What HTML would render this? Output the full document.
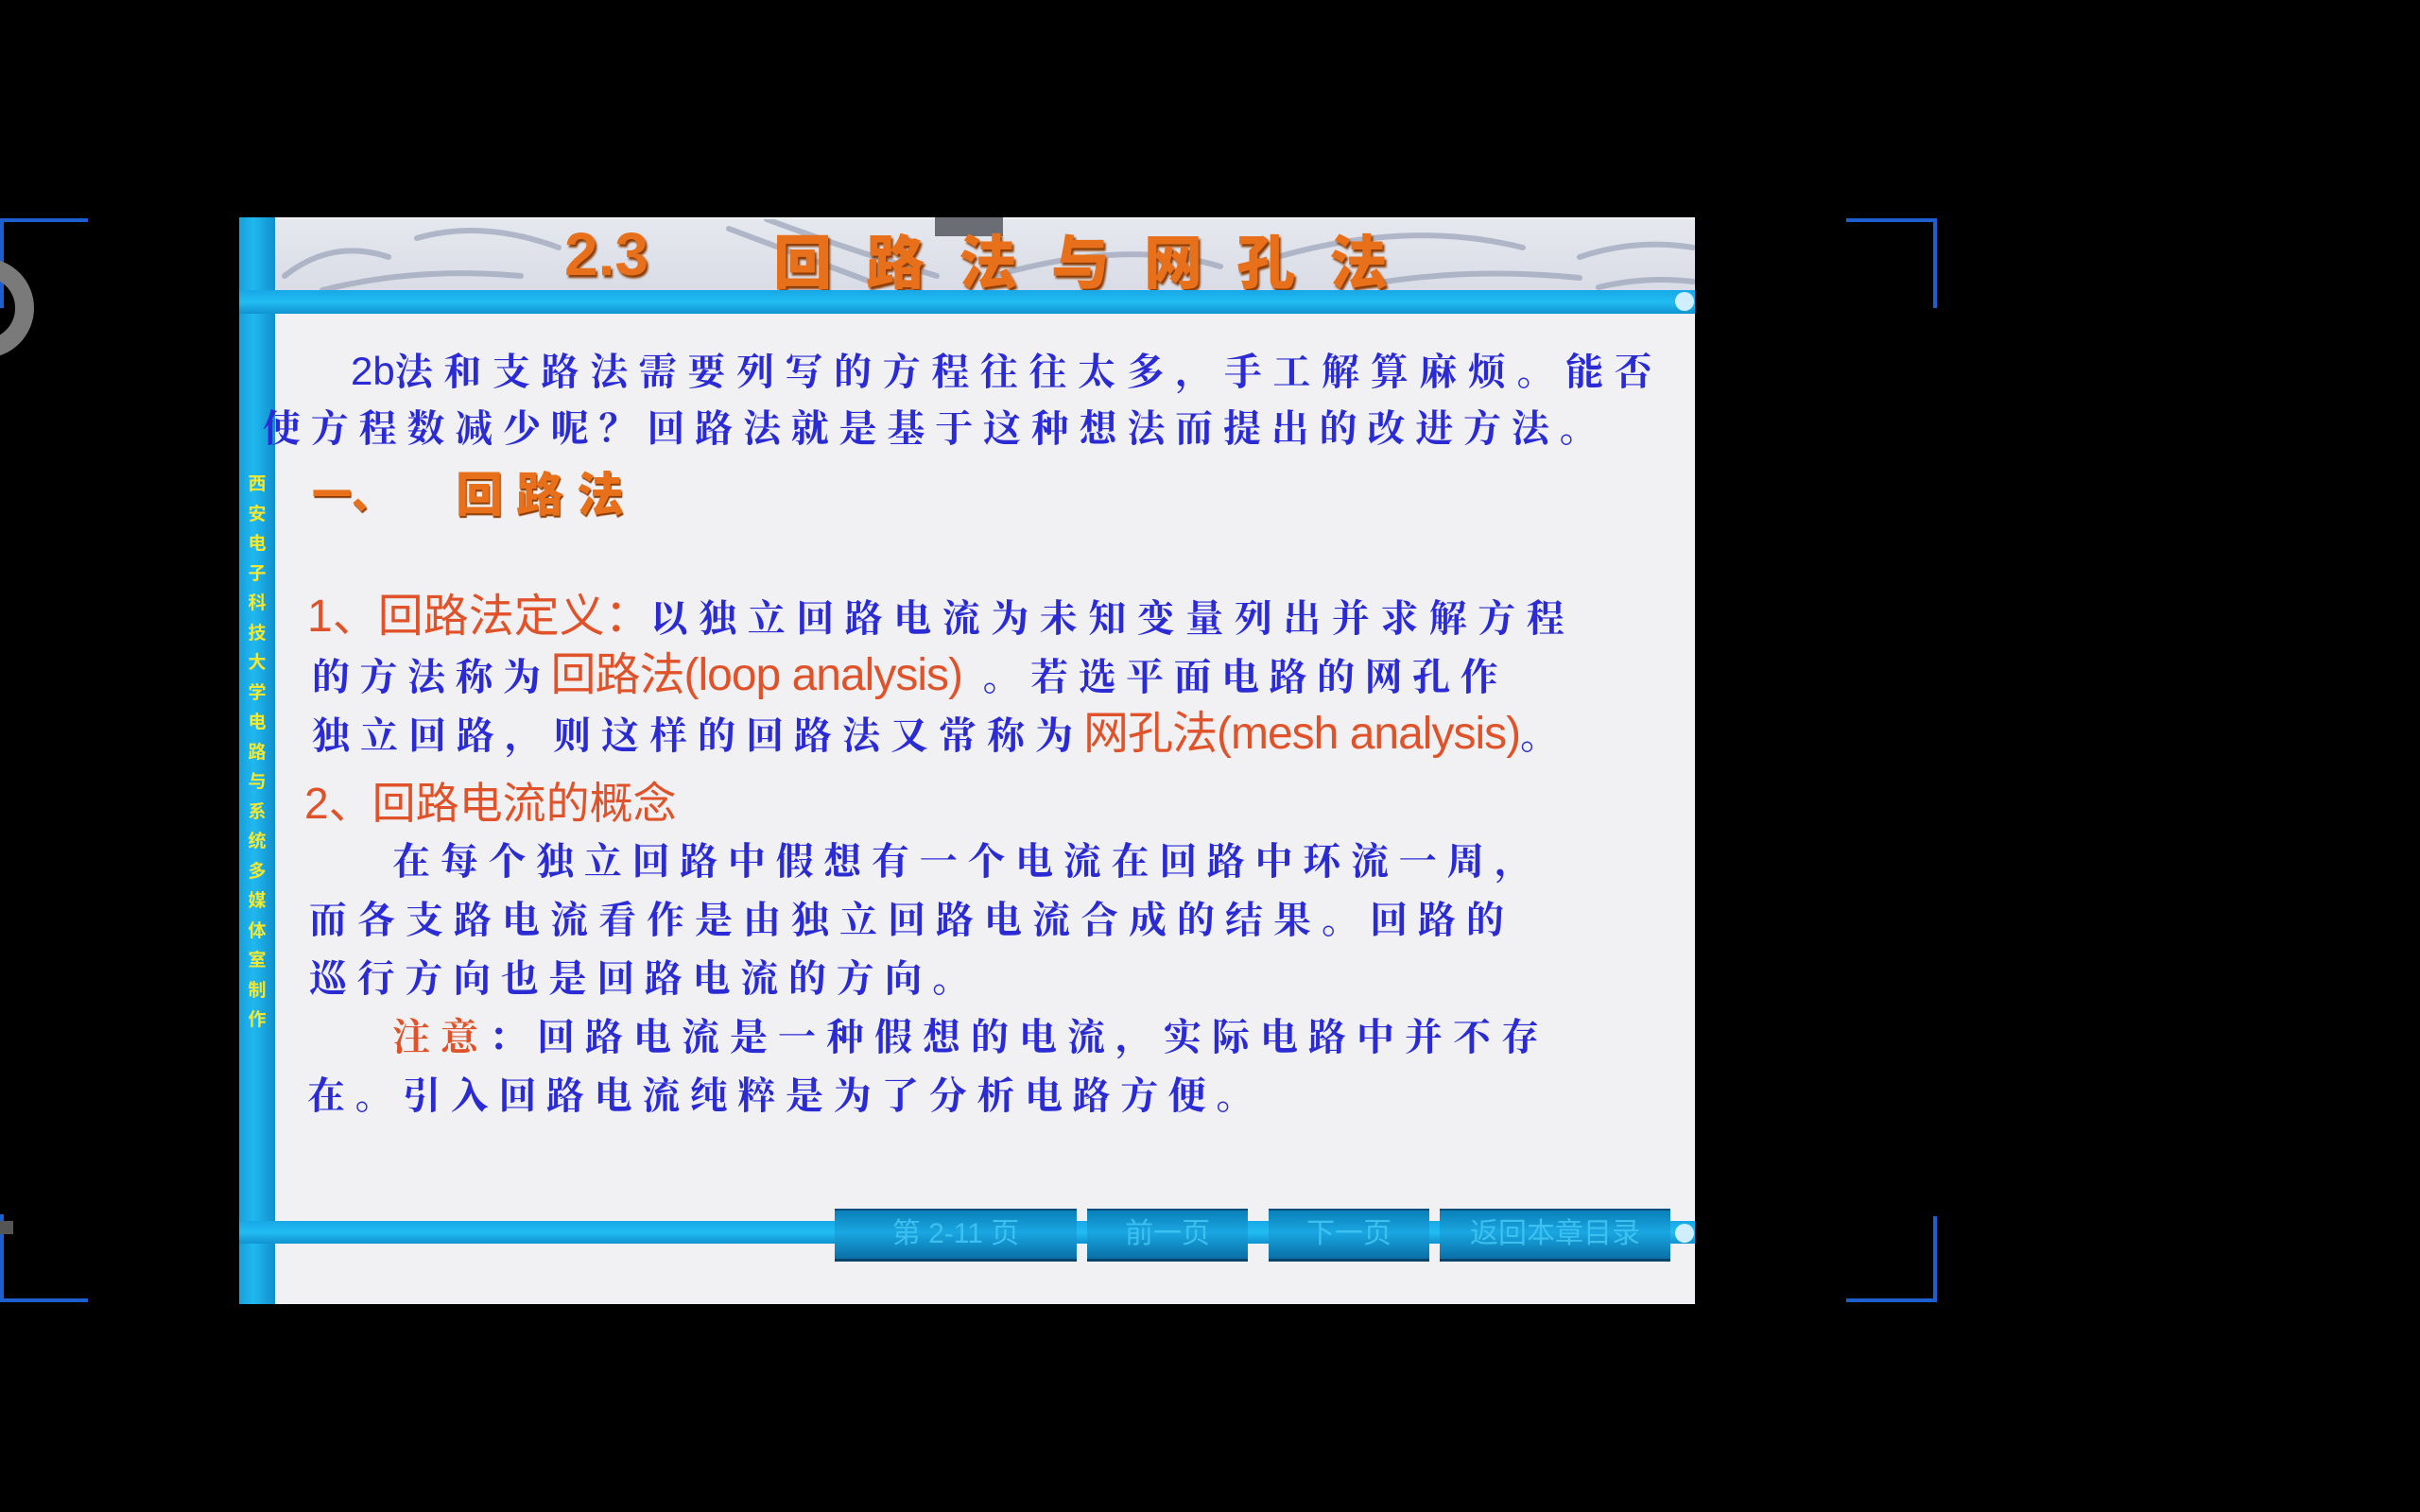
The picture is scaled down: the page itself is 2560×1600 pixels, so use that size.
<!DOCTYPE html>
<html><head><meta charset="utf-8"><style>
*{margin:0;padding:0;box-sizing:border-box}
body{width:2560px;height:1600px;background:#000;position:relative;overflow:hidden;font-family:"Liberation Sans","Noto Sans CJK SC",sans-serif}
.a{position:absolute;white-space:nowrap}
.b{color:#2b2bd6;font-size:40px;font-family:"Liberation Sans","Noto Serif CJK SC",serif;font-weight:700;letter-spacing:11px}
.o{color:#e0532a;font-size:48px;font-weight:400;font-family:"Liberation Sans","Noto Sans CJK SC",sans-serif;letter-spacing:0}
.btn{position:absolute;top:1279px;height:56px;background:linear-gradient(#0a7fb8,#1aa7e2 45%,#0a6fa6);border-top:2px solid #064f7a;border-bottom:3px solid #05456b;color:#3cc0f0;font-size:30px;text-align:center;line-height:50px;font-family:"Liberation Sans","Noto Sans CJK SC",sans-serif}
.v{position:absolute;left:262px;width:20px;color:#f2e830;font-size:19px;line-height:31.5px;text-align:center;font-weight:700;font-family:"Noto Sans CJK SC",sans-serif}
</style></head><body>
<div class="a" style="left:0;top:231px;width:93px;height:4px;background:#1e5fd0"></div>
<div class="a" style="left:0;top:231px;width:4px;height:95px;background:#1e5fd0"></div>
<div class="a" style="left:0;top:1374px;width:93px;height:4px;background:#1e5fd0"></div>
<div class="a" style="left:0;top:1285px;width:4px;height:93px;background:#1e5fd0"></div>
<div class="a" style="left:1953px;top:231px;width:96px;height:4px;background:#1e5fd0"></div>
<div class="a" style="left:2045px;top:231px;width:4px;height:95px;background:#1e5fd0"></div>
<div class="a" style="left:1953px;top:1374px;width:96px;height:4px;background:#1e5fd0"></div>
<div class="a" style="left:2045px;top:1287px;width:4px;height:91px;background:#1e5fd0"></div>
<div class="a" style="left:-70px;top:273px;width:106px;height:106px;border-radius:50%;border:20px solid #7a7a7a"></div>
<div class="a" style="left:0;top:1292px;width:14px;height:14px;background:#555"></div>

<div class="a" style="left:253px;top:230px;width:1540px;height:1150px;background:#f1f1f3"></div>
<div class="a" style="left:291px;top:232px;width:1502px;height:76px;background:linear-gradient(#e6e8ef,#d9dce6);overflow:hidden">
<svg width="1502" height="76" style="position:absolute;left:0;top:0">
<g fill="none" stroke="#9aa3b8" stroke-width="6" stroke-linecap="round" opacity=".7">
<path d="M10 60 Q60 20 120 40"/><path d="M150 20 Q220 0 300 30"/><path d="M50 75 Q150 50 260 60"/>
<path d="M480 10 Q560 40 640 70"/><path d="M520 0 Q600 30 700 60"/><path d="M760 60 Q900 20 1000 50"/>
<path d="M1060 40 Q1200 0 1320 30"/><path d="M1150 70 Q1260 50 1380 62"/><path d="M1380 40 Q1440 20 1500 30"/><path d="M1400 72 Q1450 60 1500 66"/>
</g></svg></div>
<div class="a" style="left:989px;top:230px;width:72px;height:20px;background:#6a6e74"></div>
<div class="a" style="left:597px;top:232px;font-size:64px;font-weight:700;color:#e8701a;text-shadow:2px 3px 2px #8a3a00">2.3</div>
<div class="a" style="left:818px;top:228px;font-size:62px;font-weight:900;color:#e8701a;letter-spacing:36px;text-shadow:2px 3px 2px #8a3a00;font-family:'Noto Sans CJK SC',sans-serif">回路法与网孔法</div>
<div class="a" style="left:253px;top:230px;width:38px;height:1150px;background:linear-gradient(90deg,#15a0dc,#21b8f0 40%,#118fcb)"></div>
<div class="a" style="left:253px;top:307px;width:1540px;height:25px;background:linear-gradient(#17a7e6,#22bdf2 50%,#0f93d0)"></div>
<div class="a" style="left:1772px;top:309px;width:20px;height:20px;border-radius:50%;background:#cfefff"></div>
<div class="a" style="left:253px;top:1292px;width:1540px;height:24px;background:linear-gradient(#17a7e6,#22bdf2 50%,#0f93d0)"></div>
<div class="a" style="left:1772px;top:1295px;width:20px;height:20px;border-radius:50%;background:#cfefff"></div>
<div class="btn" style="left:883px;width:256px">第 2-11 页</div>
<div class="btn" style="left:1150px;width:170px">前一页</div>
<div class="btn" style="left:1342px;width:170px">下一页</div>
<div class="btn" style="left:1523px;width:244px">返回本章目录</div>
<div class="v" style="top:495px">西<br>安<br>电<br>子<br>科<br>技<br>大<br>学<br>电<br>路<br>与<br>系<br>统<br>多<br>媒<br>体<br>室<br>制<br>作</div>

<div class="a b" style="left:371px;top:362px;letter-spacing:11.6px"><span style="font-family:'Liberation Sans';font-weight:400;letter-spacing:0;font-size:42px">2b</span>法和支路法需要列写的方程往往太多，手工解算麻烦。能否</div>
<div class="a b" style="left:278px;top:422px;letter-spacing:10.8px">使方程数减少呢？回路法就是基于这种想法而提出的改进方法。</div>
<div class="a" style="left:330px;top:490px;font-size:42px;font-weight:900;color:#e8701a;text-shadow:1px 2px 1px #8a3a00;font-family:'Noto Sans CJK SC',sans-serif">一、</div>
<div class="a" style="left:482px;top:484px;font-size:50px;font-weight:900;color:#e8701a;letter-spacing:14px;text-shadow:1px 2px 1px #8a3a00;font-family:'Noto Sans CJK SC',sans-serif">回路法</div>
<div class="a b" style="left:325px;top:612px;letter-spacing:11.5px"><span class="o">1、回路法定义：</span>以独立回路电流为未知变量列出并求解方程</div>
<div class="a b" style="left:330px;top:674px;letter-spacing:10.5px">的方法称为<span class="o" style="letter-spacing:-1px">回路法(loop analysis)</span> 。若选平面电路的网孔作</div>
<div class="a b" style="left:330px;top:736px;letter-spacing:11px">独立回路，则这样的回路法又常称为<span class="o" style="letter-spacing:-1px">网孔法(mesh analysis)</span>。</div>
<div class="a o" style="left:322px;top:814px;font-size:46px">2、回路电流的概念</div>
<div class="a b" style="left:415px;top:880px;letter-spacing:10.7px">在每个独立回路中假想有一个电流在回路中环流一周，</div>
<div class="a b" style="left:327px;top:942px;letter-spacing:11px">而各支路电流看作是由独立回路电流合成的结果。回路的</div>
<div class="a b" style="left:327px;top:1004px;letter-spacing:10.7px">巡行方向也是回路电流的方向。</div>
<div class="a b" style="left:415px;top:1066px;letter-spacing:11px"><span style="color:#e0532a">注意</span>：回路电流是一种假想的电流，实际电路中并不存</div>
<div class="a b" style="left:325px;top:1128px;letter-spacing:10.6px">在。引入回路电流纯粹是为了分析电路方便。</div>
</body></html>
